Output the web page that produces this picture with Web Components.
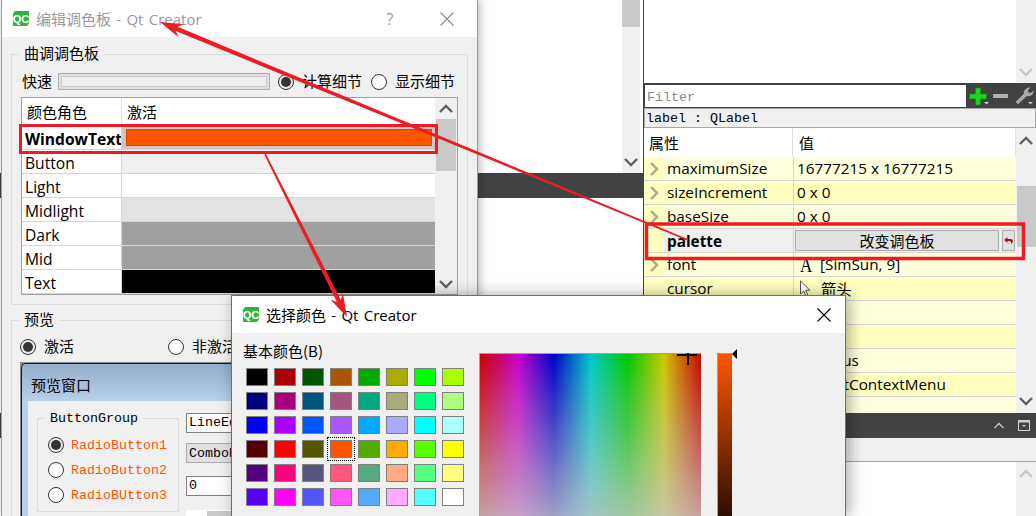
<!DOCTYPE html>
<html>
<head>
<meta charset="utf-8">
<title>Qt Creator</title>
<style>
html, body { margin: 0; padding: 0; background: #fff; }
body { width: 1036px; height: 516px; overflow: hidden; position: relative; }
</style>
</head>
<body>
<ide-shell></ide-shell>
<palette-dialog></palette-dialog>
<color-dialog></color-dialog>
<arrow-overlay></arrow-overlay>

<script>
const UI_FONT = `"Open Sans", "Noto Sans CJK SC", sans-serif`;
const CJK_FONT = `"Noto Sans CJK SC", "Open Sans", sans-serif`;
const MONO_FONT = `"Liberation Mono", "Noto Sans CJK SC", monospace`;

function chevron(dir, color) {
    const pts = dir === "up" ? "1,8 7,2 13,8" : "1,2 7,8 13,2";
    return `<svg width="14" height="10" viewBox="0 0 14 10"><polyline points="${pts}" fill="none" stroke="${color}" stroke-width="2.4"/></svg>`;
}

function qcIcon() {
    return `<svg width="16" height="15" viewBox="0 0 16 15" style="flex:none">
        <path d="M2 0H16V12L14 15H0V3Z" fill="#2fb344"/>
        <text x="8" y="11.5" text-anchor="middle" font-family="Liberation Sans, sans-serif" font-size="11" font-weight="bold" fill="#fff">QC</text>
    </svg>`;
}

class IdeShell extends HTMLElement {
    constructor() {
        super();
        this.shadowDOM = this.attachShadow({mode: "open"});
    }
    connectedCallback() {
        this.shadowDOM.innerHTML = `
        <style>
        :host { display: flex; width: 1036px; height: 516px; overflow: hidden; }
        </style>
        <editor-pane></editor-pane>
        <prop-pane></prop-pane>`;
    }
}

class EditorPane extends HTMLElement {
    constructor() {
        super();
        this.shadowDOM = this.attachShadow({mode: "open"});
    }
    connectedCallback() {
        this.shadowDOM.innerHTML = `
        <style>
        :host { display: flex; flex-direction: column; width: 643px; flex: none; height: 516px; background: #fff; }
        .top { height: 173px; display: flex; justify-content: flex-end; padding-right: 3px; }
        .bar { width: 18px; background: #f0f0f0; display: flex; flex-direction: column; justify-content: space-between; align-items: center; padding-bottom: 6px; box-sizing: border-box; }
        .thumb { width: 18px; height: 27px; background: #c9c9c9; }
        .dark { height: 25px; background: #404244; flex: none; }
        .gap { height: 215px; }
        </style>
        <div class="top"><div class="bar"><div class="thumb"></div>${chevron("down", "#606060")}</div></div>
        <div class="dark"></div>
        <div class="gap"></div>
        <div class="dark"></div>`;
    }
}

class PropRow extends HTMLElement {
    constructor() {
        super();
        this.shadowDOM = this.attachShadow({mode: "open"});
    }
    connectedCallback() {
        const tone = this.getAttribute("tone");
        const bg = tone === "dark" ? "#ffffbf" : tone === "gray" ? "#efefef" : "#ffffdc";
        this.shadowDOM.innerHTML = `
        <style>
        :host { display: flex; height: 24px; box-sizing: border-box; border-bottom: 1px solid #d6d6d6; background: ${bg}; font: 15.3px ${UI_FONT}; color: #000; }
        .gutter { width: 20px; flex: none; background: #ffffbf; display: flex; align-items: center; justify-content: center; }
        .name { width: 129px; flex: none; padding-left: 3px; box-sizing: border-box; line-height: 23px; white-space: nowrap; overflow: hidden; }
        :host([bold]) .name { font-weight: bold; line-height: 25px; }
        .value { flex: 1; min-width: 0; border-left: 1px solid #d6d6d6; padding-left: 3px; line-height: 23px; white-space: nowrap; display: flex; align-items: center; }
        </style>
        <div class="gutter">${this.hasAttribute("expand") ? `<svg width="10" height="14" viewBox="0 0 10 14"><polyline points="2,1 8,7 2,13" fill="none" stroke="#a8a88c" stroke-width="2.4"/></svg>` : ""}</div>
        <div class="name">${this.getAttribute("name")}</div>
        <div class="value"><slot></slot></div>`;
    }
}

class PropPane extends HTMLElement {
    constructor() {
        super();
        this.shadowDOM = this.attachShadow({mode: "open"});
    }
    connectedCallback() {
        this.shadowDOM.innerHTML = `
        <style>
        :host { display: flex; flex-direction: column; width: 393px; flex: none; height: 516px; border-left: 1px solid #404244; box-sizing: border-box; background: #fff; }
        .top { height: 83px; display: flex; }
        .white { flex: 1; }
        .sb { width: 20px; flex: none; background: #f0f0f0; display: flex; flex-direction: column; align-items: center; box-sizing: border-box; }
        .top .sb { justify-content: flex-end; padding-bottom: 6px; }
        .filter { height: 25px; box-sizing: border-box; padding: 2px 0 1px 1px; background: #404244; display: flex; align-items: stretch; }
        .filter .input { width: 321px; background: #fff; color: #8a8a8a; font: 13.33px/25px ${MONO_FONT}; padding-left: 2px; box-sizing: border-box; }
        .tools { flex: 1; display: flex; align-items: center; padding-left: 1px; }
        .label { height: 20px; box-sizing: border-box; background: #f0f0f0; border: 1px solid #a8a8a8; font: 13.33px/20px ${MONO_FONT}; padding-left: 1px; white-space: pre; color: #000; }
        .main { height: 285px; display: flex; }
        .table { flex: 1; min-width: 0; display: flex; flex-direction: column; overflow: hidden; }
        .head { height: 29px; flex: none; display: flex; font: 15px/30px ${CJK_FONT}; border-right: 1px solid #e4e4e4; }
        .head div:first-child { width: 149px; box-sizing: border-box; padding-left: 5px; border-right: 1px solid #dcdcdc; }
        .head div:last-child { padding-left: 6px; }
        .main .sb { position: relative; padding-top: 8px; justify-content: space-between; padding-bottom: 7px; }
        .thumb { position: absolute; left: 1px; right: 0; top: 58px; height: 61px; background: #c9c9c9; }
        .dark { height: 25px; background: #404244; flex: none; display: flex; align-items: center; justify-content: flex-end; gap: 14px; padding-right: 6px; }
        .strip { height: 23px; background: #f0f0f0; border-bottom: 1px solid #a0a0a0; flex: none; }
        .bottom { flex: 1; display: flex; }
        .bottom .sb { padding-top: 7px; }
        .serif { font: 20px/22px "Liberation Serif", serif; width: 12px; margin: 0 9px 0 2px; transform: scaleX(.85); }
        .res { flex: none; display: flex; align-items: center; gap: 3px; height: 100%; width: calc(100% + 2px); margin-left: -2px; }
        .btn { flex: 1; height: 21px; box-sizing: border-box; background: #e1e1e1; border: 1px solid #adadad; text-align: center; font: 15px/20px ${CJK_FONT}; }
        .reset { width: 13px; height: 21px; flex: none; box-sizing: border-box; background: #e1e1e1; border: 1px solid #adadad; display: flex; align-items: center; justify-content: center; margin-right: 1px; }
        .cjk { font-family: ${CJK_FONT}; }
        </style>
        <div class="top"><div class="white"></div><div class="sb">${chevron("down", "#c8c8c8")}</div></div>
        <div class="filter">
            <div class="input">Filter</div>
            <div class="tools">
                <svg width="24" height="20" viewBox="0 0 24 20">
                    <path d="M8.5 2h5v6h6v5h-6v6h-5v-6h-6V8h6z" fill="#1fd41f" stroke="#0b8f0b" stroke-width=".6"/>
                    <path d="M17 16h5l-2.5 2.5z" fill="#d0d0d0"/>
                </svg>
                <svg width="20" height="20" viewBox="0 0 20 20"><rect x="2" y="8" width="15" height="4" fill="#b4b4b4"/></svg>
                <svg width="24" height="22" viewBox="0 0 24 22">
                    <path d="M15.5 3.5a5 5 0 0 1 4-1l-2.6 2.7.7 2.2 2.2.6 2.6-2.6a5 5 0 0 1-6.4 5.6L7 19.2 4.6 17l8.3-8.2a5 5 0 0 1 2.6-5.3z" fill="#a9a9a9"/>
                    <path d="M17 17h5l-2.5 2.5z" fill="#c8c8c8"/>
                </svg>
            </div>
        </div>
        <div class="label">label : QLabel</div>
        <div class="main">
            <div class="table">
                <div class="head"><div>属性</div><div>值</div></div>
                <prop-row expand name="maximumSize">16777215 x 16777215</prop-row>
                <prop-row expand tone="dark" name="sizeIncrement">0 x 0</prop-row>
                <prop-row expand name="baseSize">0 x 0</prop-row>
                <prop-row tone="gray" bold name="palette">
                    <div class="res">
                        <div class="btn">改变调色板</div>
                        <div class="reset"><svg width="9" height="7" viewBox="0 0 9 7"><path d="M3.5 0 0 3l3.500 3V4H6q1 0 1 1.500V7L8.800 5V3.800Q8.800 2 6.500 2h-3z" fill="#a81010"/></svg></div>
                    </div>
                </prop-row>
                <prop-row expand name="font"><span class="serif">A</span>[SimSun, 9]</prop-row>
                <prop-row tone="dark" name="cursor">
                    <svg width="13" height="18" viewBox="0 0 13 18" style="margin:0 9px 0 2px;flex:none"><path d="M1.5 1v13l3.2-3 2.3 5.5 2-.9-2.300-5.300h4.300z" fill="#fff" stroke="#555" stroke-width="1"/></svg>
                    <span class="cjk">箭头</span>
                </prop-row>
                <prop-row name="mouseTracking"></prop-row>
                <prop-row tone="dark" name="tabletTracking"></prop-row>
                <prop-row name="focusPolicy">NoFocus</prop-row>
                <prop-row tone="dark" name="contextMenuPolicy">DefaultContextMenu</prop-row>
                <prop-row name="acceptDrops"></prop-row>
            </div>
            <div class="sb"><div class="thumb"></div>${chevron("up", "#606060")}${chevron("down", "#606060")}</div>
        </div>
        <div class="dark">
            <svg width="10" height="7" viewBox="0 0 10 7"><polyline points=".5,6 5,1.5 9.5,6" fill="none" stroke="#c4c4c4" stroke-width="1.4"/></svg>
            <svg width="12" height="11" viewBox="0 0 12 11"><rect x=".5" y=".5" width="11" height="10" fill="none" stroke="#d0d0d0"/><rect x=".5" y=".5" width="11" height="2" fill="#d0d0d0"/><path d="M4 5h4L6 7z" fill="#d0d0d0"/></svg>
        </div>
        <div class="strip"></div>
        <div class="bottom"><div class="white"></div><div class="sb">${chevron("up", "#c8c8c8")}</div></div>`;
    }
}

class QtTitlebar extends HTMLElement {
    constructor() {
        super();
        this.shadowDOM = this.attachShadow({mode: "open"});
    }
    connectedCallback() {
        const xColor = this.hasAttribute("inactive") ? "#8a8a8a" : "#000";
        this.shadowDOM.innerHTML = `
        <style>
        :host { display: flex; align-items: center; height: 37px; background: #fff; flex: none; padding-left: 11px; box-sizing: border-box; font: 15px ${UI_FONT}; color: #000; }
        :host([inactive]) { color: #999; }
        .title { margin-left: 7px; flex: 1; white-space: nowrap; line-height: var(--tl, 34px); word-spacing: 1.4px; }
        .help { width: 16px; text-align: center; margin-right: 42px; font-size: 16px; color: #999; }
        .x { margin-right: 14px; flex: none; }
        :host([help]) .x { margin-right: 23px; }
        </style>
        ${qcIcon()}
        <div class="title"><slot></slot></div>
        ${this.hasAttribute("help") ? `<div class="help">?</div>` : ""}
        <svg class="x" width="14" height="14" viewBox="0 0 14 14"><path d="M.5.5l13 13M13.5.5l-13 13" stroke="${xColor}" stroke-width="1.1" fill="none"/></svg>`;
    }
}

class QtRadio extends HTMLElement {
    constructor() {
        super();
        this.shadowDOM = this.attachShadow({mode: "open"});
    }
    connectedCallback() {
        this.shadowDOM.innerHTML = `
        <style>
        :host { display: inline-flex; align-items: center; gap: var(--gap, 8px); white-space: nowrap; height: 17px; }
        .dot { width: 16px; height: 16px; box-sizing: border-box; border: 1px solid #333; border-radius: 50%; background: #fff; display: flex; align-items: center; justify-content: center; flex: none; }
        :host([checked]) .dot { background: #eaeaea; }
        :host([checked]) .dot::after { content: ""; width: 10px; height: 10px; border-radius: 50%; background: #333; }
        .t { margin-top: var(--t, -2px); }
        </style>
        <span class="dot"></span><span class="t"><slot></slot></span>`;
    }
}

class QtGroup extends HTMLElement {
    constructor() {
        super();
        this.shadowDOM = this.attachShadow({mode: "open"});
    }
    connectedCallback() {
        this.shadowDOM.innerHTML = `
        <style>
        :host { display: block; }
        fieldset { margin: 0; padding: var(--pad, 9px); border: 1px solid #dcdcdc; min-width: 0; box-sizing: border-box; height: var(--h, auto); }
        legend { padding: 0 5px; margin-left: var(--lm, -2px); line-height: var(--ll, 18px); height: var(--lh, 20px); }
        </style>
        <fieldset><legend>${this.getAttribute("title")}</legend><slot></slot></fieldset>`;
    }
}

class PaletteTable extends HTMLElement {
    constructor() {
        super();
        this.shadowDOM = this.attachShadow({mode: "open"});
    }
    connectedCallback() {
        const rows = [["Button", "#f0f0f0"], ["Light", "#fff"], ["Midlight", "#e3e3e3"], ["Dark", "#a0a0a0"], ["Mid", "#a0a0a0"], ["Text", "#000"]];
        this.shadowDOM.innerHTML = `
        <style>
        :host { display: flex; height: 198px; border: 1px solid #a0a0a0; box-sizing: border-box; background: #fff; font: 15.6px ${UI_FONT}; color: #000; }
        .rows { flex: 1; min-width: 0; }
        .row { display: flex; height: 24px; box-sizing: border-box; border-bottom: 1px solid #d6d6d6; }
        .head { height: 28px; border: 0; font: 15px/28px ${CJK_FONT}; }
        .role { width: 100px; flex: none; box-sizing: border-box; border-right: 1px solid #d6d6d6; padding-left: 3px; line-height: 26px; white-space: nowrap; overflow: hidden; }
        .head .role { padding-left: 5px; line-height: 28px; border-right-color: #e4e4e4; }
        .head .val { padding-left: 5px; }
        .val { flex: 1; }
        .bold { font-weight: bold; }
        .wt { background: #c8c8c8; padding: 3px 3px 3px 4px; box-sizing: border-box; }
        .wt div { height: 100%; background: #ff5500; border: 1px solid #d24a08; box-sizing: border-box; }
        .sb { width: 22px; flex: none; background: #f0f0f0; position: relative; display: flex; flex-direction: column; justify-content: space-between; align-items: center; padding: 6px 0 5px; box-sizing: border-box; }
        .thumb { position: absolute; top: 21px; left: 1px; right: 1px; height: 52px; background: #c9c9c9; }
        </style>
        <div class="rows">
            <div class="row head"><div class="role">颜色角色</div><div class="val">激活</div></div>
            <div class="row"><div class="role bold">WindowText</div><div class="val wt"><div></div></div></div>
            ${rows.map(r => `<div class="row"><div class="role">${r[0]}</div><div class="val" style="background:${r[1]}"></div></div>`).join("")}
        </div>
        <div class="sb"><div class="thumb"></div>${chevron("up", "#606060")}${chevron("down", "#606060")}</div>`;
    }
}

class PreviewWindow extends HTMLElement {
    constructor() {
        super();
        this.shadowDOM = this.attachShadow({mode: "open"});
    }
    connectedCallback() {
        this.shadowDOM.innerHTML = `
        <style>
        :host { display: block; height: 160px; background: #8a8a8a; padding: 1px 0 0 1px; box-sizing: border-box; overflow: hidden; }
        .win { height: 100%; box-sizing: border-box; border: 1px solid #1a1a1a; border-radius: 5px 0 0 0; border-right: 0; background: linear-gradient(#93acc9, #b9d1ea 38px); font: 15px ${CJK_FONT}; color: #000; }
        .cap { height: 37px; line-height: 41px; padding-left: 9px; }
        .body { margin-left: 6px; height: 130px; background: #f0f0f0; padding: 9px 0 0 9px; display: flex; gap: 7px; box-sizing: border-box; font: 13.33px ${MONO_FONT}; }
        qt-group { width: 142px; flex: none; --pad: 6px 0 0 10px; --lm: -3px; --lh: 16px; --ll: 18px; --h: 102px; }
        .list { display: flex; flex-direction: column; gap: 8px; color: #ff5500; padding-top: 4px; --gap: 7px; --t: 1px; }
        .col { width: 260px; flex: none; padding-top: 3px; display: flex; flex-direction: column; }
        .box { height: 20px; box-sizing: border-box; border: 1px solid #808080; background: #fff; line-height: 18px; padding-left: 2px; }
        .combo { background: #e1e1e1; border-color: #adadad; margin-top: 10px; line-height: 20px; }
        .spin { margin-top: 13px; }
        .hs { margin-top: 14px; height: 8px; background: #fff; padding-left: 21px; }
        .hs div { height: 8px; margin-top: 1px; width: 100px; background: #c9c9c9; }
        </style>
        <div class="win">
            <div class="cap">预览窗口</div>
            <div class="body">
                <qt-group title="ButtonGroup">
                    <div class="list">
                        <qt-radio checked>RadioButton1</qt-radio>
                        <qt-radio>RadioButton2</qt-radio>
                        <qt-radio>RadioBUtton3</qt-radio>
                    </div>
                </qt-group>
                <div class="col">
                    <div class="box">LineEdit</div>
                    <div class="box combo">ComboBox</div>
                    <div class="box spin">0</div>
                    <div class="hs"><div></div></div>
                </div>
            </div>
        </div>`;
    }
}

class PaletteDialog extends HTMLElement {
    constructor() {
        super();
        this.shadowDOM = this.attachShadow({mode: "open"});
    }
    connectedCallback() {
        this.shadowDOM.innerHTML = `
        <style>
        :host { position: absolute; left: 1px; top: 0; width: 477px; height: 516px; box-sizing: border-box; border-left: 1px solid #9a9a9a; border-right: 1px solid #9a9a9a; background: #f0f0f0; box-shadow: 2px 0 9px rgba(0,0,0,.28); display: flex; flex-direction: column; overflow: hidden; font: 15px ${CJK_FONT}; color: #000; }
        .content { padding: 7px 9px 0; display: flex; flex-direction: column; gap: 5px; }
        .quick { display: flex; align-items: center; height: 17px; margin-bottom: 7px; margin-left: 1px; }
        .fast { width: 36px; flex: none; line-height: 15px; margin-top: -2px; }
        .track { width: 212px; height: 17px; flex: none; box-sizing: border-box; background: #e1e1e1; border: 1px solid #adadad; padding: 2px; margin-right: 8px; }
        .track div { height: 100%; box-sizing: border-box; background: #efefef; border: 1px solid #c8c8c8; }
        .quick qt-radio + qt-radio { margin-left: 9px; }
        .g2 { --pad: 8px 0 0 8px; --lm: -1px; --h: 220px; }
        .mode { display: flex; height: 17px; margin-bottom: 7px; }
        .mode qt-radio:first-child { width: 148px; }
        </style>
        <qt-titlebar inactive help>编辑调色板 - Qt Creator</qt-titlebar>
        <div class="content">
            <qt-group class="g1" title="曲调调色板">
                <div class="quick">
                    <span class="fast">快速</span>
                    <div class="track"><div></div></div>
                    <qt-radio checked>计算细节</qt-radio>
                    <qt-radio>显示细节</qt-radio>
                </div>
                <palette-table></palette-table>
            </qt-group>
            <qt-group class="g2" title="预览">
                <div class="mode">
                    <qt-radio checked>激活</qt-radio>
                    <qt-radio>非激活</qt-radio>
                </div>
                <preview-window></preview-window>
            </qt-group>
        </div>`;
    }
}

class SwatchGrid extends HTMLElement {
    constructor() {
        super();
        this.shadowDOM = this.attachShadow({mode: "open"});
    }
    connectedCallback() {
        const colors = [
            "000000","aa0000","005500","aa5500","00aa00","aaaa00","00ff00","aaff00",
            "00007f","aa007f","00557f","aa557f","00aa7f","aaaa7f","00ff7f","aaff7f",
            "0000ff","aa00ff","0055ff","aa55ff","00aaff","aaaaff","00ffff","aaffff",
            "550000","ff0000","555500","ff5500","55aa00","ffaa00","55ff00","ffff00",
            "55007f","ff007f","55557f","ff557f","55aa7f","ffaa7f","55ff7f","ffff7f",
            "5500ff","ff00ff","5555ff","ff55ff","55aaff","ffaaff","55ffff","ffffff"
        ];
        this.shadowDOM.innerHTML = `
        <style>
        :host { display: grid; grid-template-columns: repeat(8, 22px); grid-auto-rows: 18px; column-gap: 6px; row-gap: 6px; }
        div { border: 1px solid #808080; box-sizing: border-box; position: relative; }
        .on::after { content: ""; position: absolute; inset: -4px -4px; border: 1px dotted #000; }
        </style>
        ${colors.map((c, i) => `<div class="${i === 27 ? "on" : ""}" style="background:#${c}"></div>`).join("")}`;
    }
}

class ColorDialog extends HTMLElement {
    constructor() {
        super();
        this.shadowDOM = this.attachShadow({mode: "open"});
    }
    connectedCallback() {
        this.shadowDOM.innerHTML = `
        <style>
        :host { position: absolute; left: 231px; top: 295px; width: 615px; height: 221px; box-sizing: border-box; border: 1px solid #6e6e6e; border-bottom: 0; background: #f0f0f0; box-shadow: 3px 0 14px rgba(0,0,0,.35); display: flex; flex-direction: column; overflow: hidden; font: 15px ${CJK_FONT}; color: #000; }
        qt-titlebar { --tl: 32px; }
        .body { flex: 1; display: flex; padding-left: 12px; }
        .left { width: 235px; flex: none; padding-top: 9px; }
        .name { line-height: 18px; height: 20px; margin-bottom: 6px; margin-left: -1px; }
        swatch-grid { margin-left: 2px; }
        .field { margin-top: 20px; width: 222px; flex: none; height: 200px; box-sizing: border-box; border-left: 1px solid #a0a0a0; border-top: 1px solid #a0a0a0; position: relative;
            background: linear-gradient(to bottom, rgba(200,200,200,0), rgba(200,200,200,.8) 163px),
                linear-gradient(to right, #c80000 0, #c800c8 38px, #0000c8 74px, #00c8c8 111px, #00c800 148px, #c8c800 184px, #c80000 221px); }
        .cross-h { position: absolute; left: 197px; top: 0; width: 20px; height: 2px; background: #000; }
        .cross-v { position: absolute; left: 207px; top: -1px; width: 2px; height: 12px; background: #000; }
        .value { margin: 20px 0 0 16px; width: 15px; height: 200px; flex: none; box-sizing: border-box; border-left: 1px solid #a0a0a0; border-top: 1px solid #a0a0a0; position: relative; background: linear-gradient(#ff5500, #2a0e00 163px); }
        .pin { position: absolute; left: 14px; top: -5px; width: 0; height: 0; border: 5px solid transparent; border-left-width: 0; border-right: 5px solid #000; }
        </style>
        <qt-titlebar>选择颜色 - Qt Creator</qt-titlebar>
        <div class="body">
            <div class="left">
                <div class="name">基本颜色(B)</div>
                <swatch-grid></swatch-grid>
            </div>
            <div class="field"><div class="cross-h"></div><div class="cross-v"></div></div>
            <div class="value"><div class="pin"></div></div>
        </div>`;
    }
}

class ArrowOverlay extends HTMLElement {
    constructor() {
        super();
        this.shadowDOM = this.attachShadow({mode: "open"});
    }
    // tapered line from the tail to the tip, with barbs at the tip
    arrow(x1, y1, x2, y2) {
        const len = Math.hypot(x2 - x1, y2 - y1);
        const ux = (x2 - x1) / len, uy = (y2 - y1) / len;
        const nx = -uy, ny = ux;
        const at = (d, w) => `${(x2 - ux * d + nx * w).toFixed(1)},${(y2 - uy * d + ny * w).toFixed(1)}`;
        return [at(len, .8), at(18, 2.2), at(23, 7), at(0, 0), at(23, -7), at(18, -2.2), at(len, -.8)].join(" ");
    }
    connectedCallback() {
        this.shadowDOM.innerHTML = `
        <style>
        :host { position: absolute; left: 0; top: 0; width: 1036px; height: 516px; pointer-events: none; }
        svg { display: block; }
        </style>
        <svg width="1036" height="516" viewBox="0 0 1036 516" fill="none">
            <rect x="20.5" y="125.5" width="416" height="27" stroke="#ed1c24" stroke-width="3"/>
            <rect x="646.5" y="224" width="377" height="34.5" stroke="#ed1c24" stroke-width="3.5"/>
            <polygon points="${this.arrow(688, 240, 160, 22)}" fill="#ed1c24"/>
            <polygon points="${this.arrow(265, 154, 347, 317)}" fill="#ed1c24"/>
        </svg>`;
    }
}

customElements.define("qt-titlebar", QtTitlebar);
customElements.define("qt-radio", QtRadio);
customElements.define("qt-group", QtGroup);
customElements.define("prop-row", PropRow);
customElements.define("palette-table", PaletteTable);
customElements.define("preview-window", PreviewWindow);
customElements.define("swatch-grid", SwatchGrid);
customElements.define("editor-pane", EditorPane);
customElements.define("prop-pane", PropPane);
customElements.define("ide-shell", IdeShell);
customElements.define("palette-dialog", PaletteDialog);
customElements.define("color-dialog", ColorDialog);
customElements.define("arrow-overlay", ArrowOverlay);
</script>
</body>
</html>
